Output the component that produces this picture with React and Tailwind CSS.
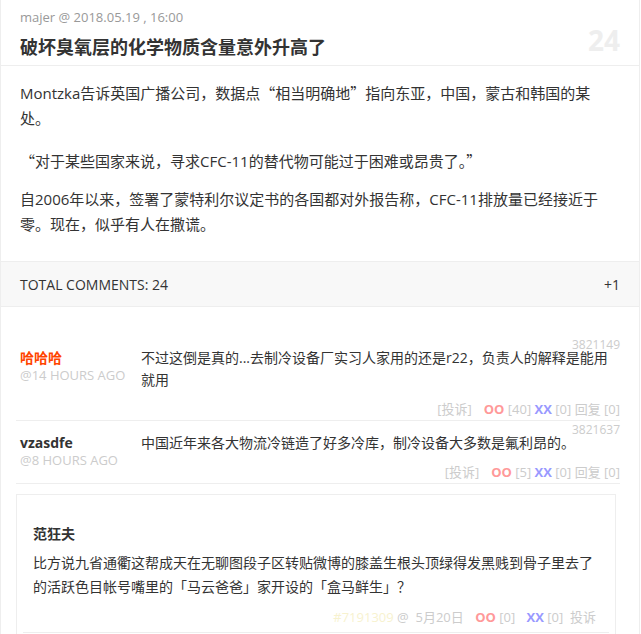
import React from 'react'

const Q = ({ children }) => (
    <span className="font-['Noto_Sans_CJK_SC',sans-serif]">{children}</span>
)

const comments = [
    {
        id: '3821149',
        name: '哈哈哈',
        nameColor: 'text-[#ff4400]',
        time: '@14 HOURS AGO',
        text: '不过这倒是真的...去制冷设备厂实习人家用的还是r22，负责人的解释是能用就用',
        oo: 40,
        xx: 0,
        reply: 0,
    },
    {
        id: '3821637',
        name: 'vzasdfe',
        nameColor: 'text-[#333]',
        time: '@8 HOURS AGO',
        text: '中国近年来各大物流冷链造了好多冷库，制冷设备大多数是氟利昂的。',
        oo: 5,
        xx: 0,
        reply: 0,
    },
]

const Comment = ({ c }) => (
    <div className="pt-[2px] pb-[1px] border-b border-[#eee]">
        <div className="text-right text-xs leading-[14px] text-[#ccc]">{c.id}</div>
        <div className="flex -mt-[5px]">
            <div className="w-[125px] shrink-0 pl-1 pt-[2px]">
                <div className={`text-sm font-bold leading-[18px] ${c.nameColor}`}>{c.name}</div>
                <div className="text-[13px] leading-4 text-[#ccc]">{c.time}</div>
            </div>
            <div className="flex-1">
                <p className="text-sm leading-[22px] text-[#333]">{c.text}</p>
                <div className="mt-2 text-right text-[13px] leading-5 text-[#ccc]">
                    <span>[投诉]</span>
                    <span className="ml-3 font-bold text-[#ff9999]">OO</span>
                    <span> [{c.oo}] </span>
                    <span className="font-bold text-[#9999ff]">XX</span>
                    <span> [{c.xx}] 回复 [{c.reply}]</span>
                </div>
            </div>
        </div>
    </div>
)

export default function App() {
    return (
        <div className="w-[640px] min-h-[634px] bg-white border-x border-[#eee] font-['Open_Sans','Noto_Sans_CJK_SC',sans-serif] text-[#333]">
            {/* Header */}
            <div className="flex justify-between px-[19px] pb-[5px] border-b border-[#eee]">
                <div className="pt-[7px]">
                    <div className="text-[13px] leading-5 text-[#999]">majer @ 2018.05.19 , 16:00</div>
                    <h1 className="mt-[7px] text-lg font-bold leading-[26px] text-[#333]">破坏臭氧层的化学物质含量意外升高了</h1>
                </div>
                <div className="pt-[22px] text-[28px] font-bold leading-9 text-[#eee]">24</div>
            </div>

            {/* Body */}
            <div className="pl-[19px] pr-[36px] pt-[14px] pb-[24px] text-[15px] leading-[25px] text-[#333]">
                <p className="mb-[17px]">
                    Montzka告诉英国广播公司，数据点<Q>“</Q>相当明确地<Q>”</Q>指向东亚，中国，蒙古和韩国的某处。
                </p>
                <p className="mb-[13px]">
                    <Q>“</Q>对于某些国家来说，寻求CFC-11的替代物可能过于困难或昂贵了。<Q>”</Q>
                </p>
                <p>
                    自2006年以来，签署了蒙特利尔议定书的各国都对外报告称，CFC-11排放量已经接近于零。现在，似乎有人在撒谎。
                </p>
            </div>

            {/* Comment count bar */}
            <div className="flex justify-between px-[19px] pt-[13px] pb-[11px] bg-[#f8f8f8] border-y border-[#eee] text-sm leading-5 text-[#333]">
                <span>TOTAL COMMENTS: 24</span>
                <span>+1</span>
            </div>

            {/* Comments */}
            <div className="pl-[15px] pr-[19px] pt-[29px]">
                {comments.map((c) => (
                    <Comment key={c.id} c={c} />
                ))}

                {/* Quoted reply */}
                <div className="mt-[10px] mr-1 border border-[#eee] px-4 pt-[29px]">
                    <div className="text-sm font-bold leading-5 text-[#333]">范狂夫</div>
                    <p className="mt-[7px] text-sm leading-6 text-[#333]">
                        比方说九省通衢这帮成天在无聊图段子区转贴微博的膝盖生根头顶绿得发黑贱到骨子里去了的活跃色目帐号嘴里的「马云爸爸」家开设的「盒马鲜生」？
                    </p>
                    <div className="mt-2 pr-[3px] text-right text-[13px] leading-5 text-[#ccc]">
                        <span className="text-[#f7f2cf]">#7191309</span>
                        <span> @ &nbsp;5月20日 </span>
                        <span className="ml-2 font-bold text-[#ff9999]">OO</span>
                        <span> [0] </span>
                        <span className="ml-2 font-bold text-[#9999ff]">XX</span>
                        <span> [0] &nbsp;投诉</span>
                    </div>
                    <div className="mt-[5px] -mx-[10px] border-t border-[#eee] h-4" />
                </div>
            </div>
        </div>
    )
}
